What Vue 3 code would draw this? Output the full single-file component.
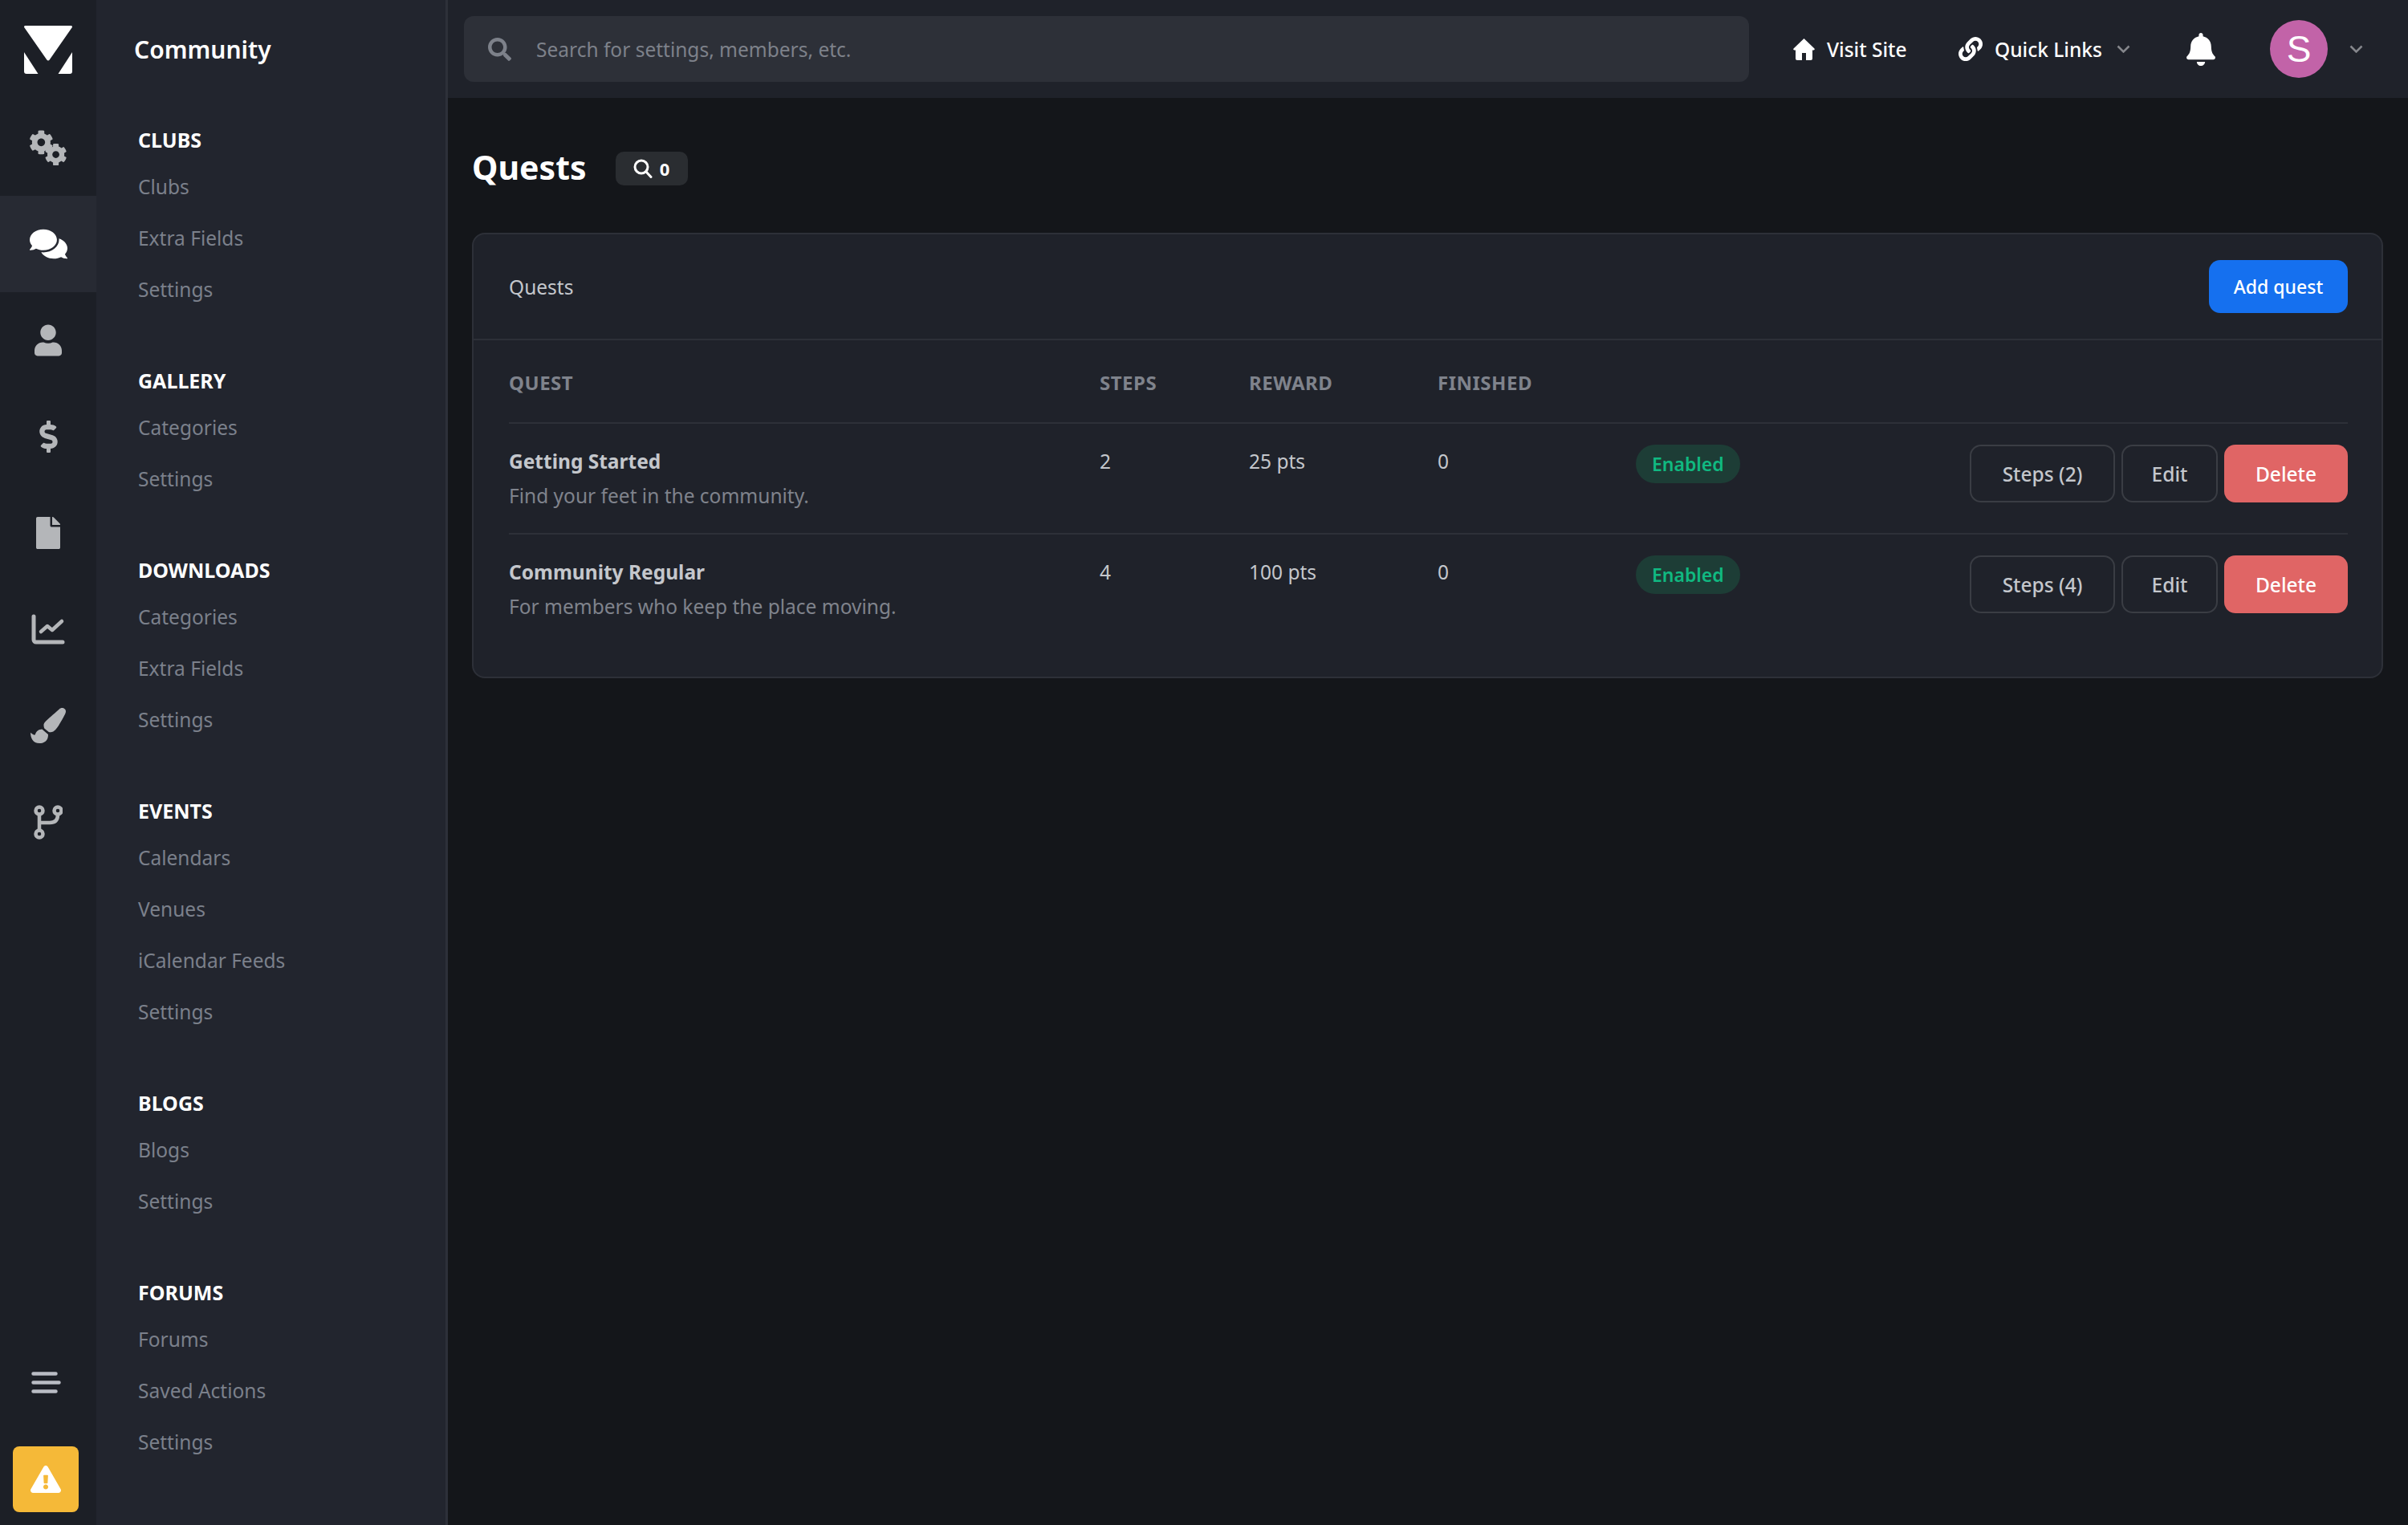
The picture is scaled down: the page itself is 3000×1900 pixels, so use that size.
<script setup>
const cog =
    'M487.4 315.7l-42.6-24.6c4.3-23.2 4.3-47 0-70.2l42.6-24.6c4.9-2.8 7.1-8.6 5.5-14-11.1-35.6-30-67.8-54.7-94.6-3.8-4.1-10-5.1-14.8-2.3L380.8 110c-17.9-15.4-38.5-27.3-60.8-35.1V25.8c0-5.6-3.9-10.5-9.4-11.7-36.7-8.2-74.3-7.8-109.2 0-5.5 1.2-9.4 6.1-9.4 11.7V75c-22.2 7.9-42.8 19.8-60.8 35.1L88.7 85.5c-4.9-2.8-11-1.9-14.8 2.3-24.7 26.7-43.6 58.9-54.7 94.6-1.7 5.4.6 11.2 5.5 14L67.3 221c-4.3 23.2-4.3 47 0 70.2l-42.6 24.6c-4.9 2.8-7.1 8.6-5.5 14 11.1 35.6 30 67.8 54.7 94.6 3.8 4.1 10 5.1 14.8 2.3l42.6-24.6c17.9 15.4 38.5 27.3 60.8 35.1v49.2c0 5.6 3.9 10.5 9.4 11.7 36.7 8.2 74.3 7.8 109.2 0 5.5-1.2 9.4-6.1 9.4-11.7v-49.2c22.2-7.9 42.8-19.8 60.8-35.1l42.6 24.6c4.9 2.8 11 1.9 14.8-2.3 24.7-26.7 43.6-58.9 54.7-94.6 1.5-5.5-.7-11.3-5.6-14.1zM256 336c-44.1 0-80-35.9-80-80s35.9-80 80-80 80 35.9 80 80-35.9 80-80 80z';

const railItems = [
    { id: 'gears', w: 48, h: 44, box: '0 0 48 44', cogs: true },
    {
        id: 'chat',
        w: 47,
        h: 44,
        box: '0 0 576 512',
        d: 'M416 192c0-88.4-93.1-160-208-160S0 103.6 0 192c0 34.3 14.1 65.9 38 92-13.4 30.2-35.5 54.2-35.8 54.5-2.2 2.3-2.8 5.7-1.5 8.7S4.8 352 8 352c36.6 0 66.9-12.3 88.7-25 32.2 15.7 70.3 25 111.3 25 114.9 0 208-71.6 208-160zm122 220c23.9-26 38-57.7 38-92 0-66.9-53.5-124.2-129.3-148.1.9 6.6 1.3 13.3 1.3 20.1 0 105.9-107.7 192-240 192-10.8 0-21.3-.8-31.7-1.9C207.8 439.6 281.8 480 368 480c41 0 79.1-9.2 111.3-25 21.8 12.7 52.1 25 88.7 25 3.2 0 6.1-1.9 7.3-4.8 1.3-2.9.7-6.3-1.5-8.7-.3-.3-22.4-24.2-35.8-54.5z',
        active: true,
    },
    {
        id: 'user',
        w: 34,
        h: 40,
        box: '0 0 448 512',
        d: 'M224 256c70.7 0 128-57.3 128-128S294.7 0 224 0 96 57.3 96 128s57.3 128 128 128zm89.6 32h-16.7c-22.2 10.2-46.9 16-72.9 16s-50.6-5.8-72.9-16h-16.7C60.2 288 0 348.2 0 422.4V464c0 26.5 21.5 48 48 48h352c26.5 0 48-21.5 48-48v-41.6c0-74.2-60.2-134.4-134.4-134.4z',
    },
    {
        id: 'dollar',
        w: 25,
        h: 40,
        box: '0 0 288 512',
        d: 'M209.2 233.4l-108-31.6C88.7 198.2 80 186.5 80 173.5c0-16.3 13.2-29.5 29.5-29.5h66.3c12.2 0 24.2 3.7 34.2 10.5 6.1 4.1 14.3 3.1 19.5-2l34.8-34c7.1-6.9 6.1-18.4-1.8-24.5C238 74.8 207.4 64.1 176 64V16c0-8.8-7.2-16-16-16h-32c-8.8 0-16 7.2-16 16v48h-2.5C45.8 64-5.4 118.7.5 183.6c4.2 46.1 39.4 83.6 83.8 96.6l102.5 30c12.5 3.7 21.2 15.3 21.2 28.3 0 16.3-13.2 29.5-29.5 29.5h-66.3C100 368 88 364.3 78 357.5c-6.1-4.1-14.3-3.1-19.5 2l-34.8 34c-7.1 6.9-6.1 18.4 1.8 24.5 24.5 19.2 55.1 29.9 86.5 30v48c0 8.8 7.2 16 16 16h32c8.8 0 16-7.2 16-16v-48.2c46.6-.9 90.3-28.6 105.7-72.7 21.5-61.6-14.6-124.8-72.5-141.7z',
    },
    {
        id: 'file',
        w: 32,
        h: 40,
        box: '0 0 384 512',
        d: 'M224 136V0H24C10.7 0 0 10.7 0 24v464c0 13.3 10.7 24 24 24h336c13.3 0 24-10.7 24-24V160H248c-13.2 0-24-10.8-24-24zm160-14.1v6.1H256V0h6.1c6.4 0 12.5 2.5 17 7l97.9 98c4.5 4.5 7 10.6 7 16.9z',
    },
    { id: 'chart', w: 42, h: 38, box: '0 0 42 38', chart: true },
    {
        id: 'brush',
        w: 46,
        h: 44,
        box: '0 0 512 512',
        d: 'M167.02 309.34c-40.12 2.58-76.53 17.86-97.19 72.3-2.35 6.21-8 9.98-14.59 9.98-11.11 0-45.46-27.67-55.25-34.35C0 439.62 37.93 512 128 512c75.86 0 128-43.77 128-120.19 0-3.11-.65-6.08-.97-9.13l-88.01-73.34zM457.89 0c-15.16 0-29.37 6.71-40.21 16.45C213.27 199.05 192 203.34 192 257.09c0 13.7 3.25 26.76 8.73 38.7l63.82 53.18c7.21 1.8 14.64 3.03 22.39 3.03 62.11 0 98.11-45.47 211.16-256.46 7.38-14.35 13.9-29.85 13.9-45.99C512 20.64 486 0 457.89 0z',
    },
    { id: 'branch', w: 36, h: 43, box: '0 0 36 43', branch: true },
];

const sections = [
    { title: 'Clubs', items: ['Clubs', 'Extra Fields', 'Settings'] },
    { title: 'Gallery', items: ['Categories', 'Settings'] },
    { title: 'Downloads', items: ['Categories', 'Extra Fields', 'Settings'] },
    { title: 'Events', items: ['Calendars', 'Venues', 'iCalendar Feeds', 'Settings'] },
    { title: 'Blogs', items: ['Blogs', 'Settings'] },
    { title: 'Forums', items: ['Forums', 'Saved Actions', 'Settings'] },
    { title: 'Realtime', items: ['Settings'] },
];

const quests = [
    {
        name: 'Getting Started',
        description: 'Find your feet in the community.',
        steps: 2,
        reward: '25 pts',
        finished: 0,
    },
    {
        name: 'Community Regular',
        description: 'For members who keep the place moving.',
        steps: 4,
        reward: '100 pts',
        finished: 0,
    },
];
</script>

<template>
    <div class="app">
        <nav class="rail">
            <div class="rail-logo">
                <svg width="60" height="60" viewBox="0 0 60 60" fill="#fff">
                    <path d="M1.5 0h57c1.2 0 1.9 1.3 1.2 2.3L31.5 42.800c-.7 1-2.300 1-3 0L.3 2.300C-.4 1.300.3 0 1.500 0z" />
                    <path d="M0 33l17.500 27H3a3 3 0 0 1-3-3z" />
                    <path d="M60 33L42.500 60H57a3 3 0 0 0 3-3z" />
                </svg>
            </div>
            <a v-for="item in railItems" :key="item.id" class="rail-item" :class="{ active: item.active }">
                <svg :width="item.w" :height="item.h" :viewBox="item.box" fill="currentColor">
                    <template v-if="item.cogs">
                        <path :d="cog" transform="translate(0 0) scale(0.06)" />
                        <path :d="cog" transform="translate(19.500 16.500) scale(0.055)" />
                    </template>
                    <g v-else-if="item.chart" fill="none" stroke="currentColor" stroke-width="5" stroke-linecap="round" stroke-linejoin="round">
                        <path d="M3 3v29a3 3 0 0 0 3 3h33" />
                        <path d="M12 22l8-7 6 5 12-11" stroke-width="4.500" />
                    </g>
                    <g v-else-if="item.branch" fill="none" stroke="currentColor" stroke-width="4.500">
                        <circle cx="7" cy="7" r="4.500" />
                        <circle cx="30" cy="7" r="4.500" />
                        <circle cx="7" cy="36" r="4.500" />
                        <path d="M7 12v19M30 12c0 8-5 10-10 10H7" />
                    </g>
                    <path v-else :d="item.d" />
                </svg>
            </a>
            <div class="rail-bottom">
                <button type="button" class="menu-toggle">
                    <svg width="37" height="27" viewBox="0 0 37 27" fill="none" stroke="currentColor" stroke-width="4.500" stroke-linecap="round">
                        <path d="M2.500 2.500h28M2.500 13.500h32M2.500 24.500h28" />
                    </svg>
                </button>
                <button type="button" class="warning-button">
                    <svg width="38" height="34" viewBox="0 0 576 512" fill="#fff">
                        <path d="M569.517 440.013C587.975 472.007 564.806 512 527.94 512H48.054c-36.937 0-59.999-40.055-41.577-71.987L246.423 23.985c18.467-32.009 64.72-31.951 83.154 0l239.94 416.028zM288 354c-25.405 0-46 20.595-46 46s20.595 46 46 46 46-20.595 46-46-20.595-46-46-46zm-43.673-165.346l7.418 136c.347 6.364 5.609 11.346 11.982 11.346h48.546c6.373 0 11.635-4.982 11.982-11.346l7.418-136c.375-6.874-5.098-12.654-11.982-12.654h-63.383c-6.884 0-12.356 5.78-11.981 12.654z" />
                    </svg>
                </button>
            </div>
        </nav>

        <aside class="sidebar">
            <h2 class="sidebar-title">Community</h2>
            <section v-for="section in sections" :key="section.title" class="side-section">
                <h3 class="side-heading">{{ section.title }}</h3>
                <a v-for="item in section.items" :key="item" class="side-link">{{ item }}</a>
            </section>
        </aside>

        <div class="main">
            <header class="topbar">
                <div class="search">
                    <svg class="search-icon" width="29" height="29" viewBox="0 0 512 512" fill="currentColor">
                        <path d="M505 442.7L405.3 343c-4.500-4.500-10.600-7-17-7H372c27.600-35.300 44-79.700 44-128C416 93.100 322.900 0 208 0S0 93.100 0 208s93.100 208 208 208c48.300 0 92.700-16.400 128-44v16.300c0 6.400 2.500 12.500 7 17l99.700 99.700c9.400 9.400 24.600 9.400 33.900 0l28.300-28.300c9.400-9.400 9.400-24.600.1-34zM208 336c-70.700 0-128-57.200-128-128 0-70.700 57.200-128 128-128 70.700 0 128 57.200 128 128 0 70.700-57.200 128-128 128z" />
                    </svg>
                    <span class="search-text">Search for settings, members, etc.</span>
                </div>
                <a class="top-link visit-link">
                    <svg width="27" height="27" viewBox="0 0 27 27" fill="currentColor">
                        <path fill-rule="evenodd" d="M13.500 0l13 12.500c.6.800.2 2-1 2H24v10.500a2 2 0 0 1-2 2H5a2 2 0 0 1-2-2V14.500H1.500c-1.200 0-1.600-1.200-1-2zM11 18v9h5v-9z" />
                    </svg>
                    <span>Visit Site</span>
                </a>
                <a class="top-link quick-link">
                    <svg width="30" height="30" viewBox="0 0 512 512" fill="currentColor">
                        <path d="M326.612 185.391c59.747 59.809 58.927 155.698.36 214.59-.11.12-.24.25-.36.37l-67.2 67.2c-59.27 59.27-155.699 59.262-214.96 0-59.27-59.26-59.27-155.7 0-214.96l37.106-37.106c9.84-9.84 26.786-3.3 27.294 10.606.648 17.722 3.826 35.527 9.69 52.721 1.986 5.822.567 12.262-3.783 16.612l-13.087 13.087c-28.026 28.026-28.905 73.66-1.155 101.96 28.024 28.579 74.086 28.749 102.325.51l67.2-67.19c28.191-28.191 28.073-73.757 0-101.83-3.701-3.694-7.429-6.564-10.341-8.569a16.037 16.037 0 0 1-6.947-12.606c-.396-10.567 3.348-21.456 11.698-29.806l21.054-21.055c5.521-5.521 14.182-6.199 20.584-1.731a152.482 152.482 0 0 1 20.522 17.197zM467.547 44.449c-59.261-59.262-155.69-59.27-214.96 0l-67.2 67.2c-.12.12-.25.25-.36.37-58.566 58.892-59.387 154.781.36 214.59a152.454 152.454 0 0 0 20.521 17.196c6.402 4.468 15.064 3.789 20.584-1.731l21.054-21.055c8.35-8.35 12.094-19.239 11.698-29.806a16.037 16.037 0 0 0-6.947-12.606c-2.912-2.005-6.64-4.875-10.341-8.569-28.073-28.073-28.191-73.639 0-101.83l67.2-67.19c28.239-28.239 74.3-28.069 102.325.51 27.75 28.3 26.872 73.934-1.155 101.96l-13.087 13.087c-4.35 4.35-5.769 10.79-3.783 16.612 5.864 17.194 9.042 34.999 9.69 52.721.509 13.906 17.454 20.446 27.294 10.606l37.106-37.106c59.271-59.259 59.271-155.699.001-214.959z" />
                    </svg>
                    <span>Quick Links</span>
                    <svg class="chevron" width="17" height="10" viewBox="0 0 17 10" fill="none" stroke="currentColor" stroke-width="2.500">
                        <path d="M1.500 1.500l7 7 7-7" />
                    </svg>
                </a>
                <button type="button" class="bell">
                    <svg width="36" height="41" viewBox="0 0 448 512" fill="#fff">
                        <path d="M224 512c35.32 0 63.97-28.65 63.97-64H160.03c0 35.35 28.65 64 63.97 64zm215.39-149.71c-19.32-20.76-55.47-51.99-55.47-154.29 0-77.7-54.48-139.9-127.94-155.16V32c0-17.67-14.32-32-31.98-32s-31.98 14.33-31.98 32v20.84C118.56 68.1 64.08 130.3 64.08 208c0 102.3-36.15 133.53-55.47 154.29-6 6.45-8.66 14.16-8.61 21.71.11 16.4 12.98 32 32.1 32h383.8c19.12 0 32-15.6 32.1-32 .05-7.55-2.61-15.27-8.61-21.71z" />
                    </svg>
                </button>
                <div class="account">
                    <span class="avatar">S</span>
                    <svg class="chevron" width="17" height="10" viewBox="0 0 17 10" fill="none" stroke="currentColor" stroke-width="2.500">
                        <path d="M1.500 1.500l7 7 7-7" />
                    </svg>
                </div>
            </header>

            <main class="content">
                <div class="page-head">
                    <h1 class="page-title">Quests</h1>
                    <span class="count-badge">
                        <svg width="24" height="24" viewBox="0 0 24 24" fill="none" stroke="currentColor" stroke-width="3" stroke-linecap="round">
                            <circle cx="10" cy="10" r="8" />
                            <path d="M16 16l6 6.500" />
                        </svg>
                        0
                    </span>
                </div>

                <section class="card">
                    <div class="card-head">
                        <span class="card-title">Quests</span>
                        <button type="button" class="btn btn-primary">Add quest</button>
                    </div>
                    <div class="card-body">
                        <div class="table-row table-head">
                            <span>Quest</span>
                            <span>Steps</span>
                            <span>Reward</span>
                            <span>Finished</span>
                        </div>
                        <div v-for="quest in quests" :key="quest.name" class="table-row">
                            <div>
                                <div class="quest-name">{{ quest.name }}</div>
                                <div class="quest-desc">{{ quest.description }}</div>
                            </div>
                            <div class="cell">{{ quest.steps }}</div>
                            <div class="cell">{{ quest.reward }}</div>
                            <div class="cell">{{ quest.finished }}</div>
                            <div><span class="status">Enabled</span></div>
                            <div class="actions">
                                <button type="button" class="btn btn-outline steps-btn">Steps ({{ quest.steps }})</button>
                                <button type="button" class="btn btn-outline edit-btn">Edit</button>
                                <button type="button" class="btn btn-danger delete-btn">Delete</button>
                            </div>
                        </div>
                    </div>
                </section>
            </main>
        </div>
    </div>
</template>

<style>
html,
body {
    margin: 0;
    background: #14161a;
}
</style>

<style scoped>
.app {
    display: flex;
    width: 3000px;
    height: 1900px;
    overflow: hidden;
    background: #14161a;
    font-family: 'Noto Sans', 'Open Sans', sans-serif;
    font-size: 24.5px;
    color: #c4c7cc;
}

.rail {
    flex: 0 0 120px;
    display: flex;
    flex-direction: column;
    background: #1c1f26;
}

.rail-logo {
    height: 124px;
    display: flex;
    align-items: center;
    justify-content: center;
}

.rail-item {
    height: 120px;
    display: flex;
    align-items: center;
    justify-content: center;
    color: #b4b6b9;
}

.rail-item.active {
    background: #272a33;
    color: #fff;
}

.rail-bottom {
    margin-top: auto;
    padding: 0 22px 16px 16px;
    display: flex;
    flex-direction: column;
}

.menu-toggle {
    align-self: flex-start;
    margin: 0 0 66px 23px;
    padding: 0;
    border: none;
    background: none;
    color: #b9bcc4;
    line-height: 0;
}

.warning-button {
    width: 82px;
    height: 82px;
    padding: 0;
    border: none;
    border-radius: 8px;
    background: #f5b938;
    display: flex;
    align-items: center;
    justify-content: center;
}

.sidebar {
    flex: 0 0 438px;
    box-sizing: border-box;
    padding: 0 20px 0 52px;
    background: #22252e;
    border-right: 3px solid #2d3039;
    overflow: hidden;
}

.sidebar-title {
    margin: 0 0 23px -5px;
    height: 124px;
    line-height: 124px;
    font-size: 30px;
    font-weight: 600;
    color: #fff;
}

.side-section {
    margin-bottom: 54px;
}

.side-heading {
    margin: 0;
    line-height: 54px;
    font-size: 25px;
    font-weight: 700;
    text-transform: uppercase;
    color: #fff;
}

.side-link {
    display: block;
    line-height: 64px;
    color: #7b808b;
}

.main {
    flex: 1;
    min-width: 0;
    display: flex;
    flex-direction: column;
}

.topbar {
    height: 122px;
    flex: none;
    box-sizing: border-box;
    padding: 0 54px 0 20px;
    display: flex;
    align-items: center;
    background: #1f222a;
}

.search {
    width: 1601px;
    height: 82px;
    box-sizing: border-box;
    padding: 0 30px;
    display: flex;
    align-items: center;
    gap: 31px;
    border-radius: 12px;
    background: #2d3038;
    color: #7d818a;
}

.top-link {
    display: flex;
    align-items: center;
    gap: 15px;
    font-weight: 500;
    color: #fff;
}

.visit-link {
    margin-left: 55px;
    width: 206px;
}

.quick-link {
    width: 284px;
}

.quick-link .chevron {
    margin-left: 3px;
}

.chevron {
    color: #85878c;
}

.bell {
    padding: 0;
    border: none;
    background: none;
    line-height: 0;
    width: 104px;
    text-align: left;
}

.account {
    display: flex;
    align-items: center;
    gap: 27px;
}

.avatar {
    width: 72px;
    height: 72px;
    border-radius: 50%;
    background: #c263a8;
    color: #fff;
    display: flex;
    align-items: center;
    justify-content: center;
    font-family: 'Liberation Sans', sans-serif;
    font-size: 46px;
}

.content {
    padding: 58px 31px 0 30px;
}

.page-head {
    height: 56px;
    margin-bottom: 54px;
    display: flex;
    align-items: center;
    gap: 36px;
}

.page-title {
    margin: 0;
    font-size: 41px;
    font-weight: 700;
    color: #fff;
}

.count-badge {
    width: 90px;
    height: 42px;
    display: flex;
    align-items: center;
    justify-content: center;
    gap: 9px;
    margin-top: 4px;
    border-radius: 10px;
    background: #2a2d31;
    color: #fff;
    font-size: 22px;
    font-weight: 700;
}

.card {
    box-sizing: border-box;
    height: 555px;
    border: 2px solid #2d3038;
    border-radius: 16px;
    background: #1f222a;
}

.card-head {
    height: 130px;
    box-sizing: border-box;
    padding: 0 42px 0 44px;
    display: flex;
    align-items: center;
    justify-content: space-between;
    border-bottom: 2px solid #2d3038;
    height: 132px;
}

.card-title {
    color: #c4c7cc;
}

.card-body {
    padding: 0 42px 0 44px;
}

.table-row {
    display: grid;
    grid-template-columns: 736px 186px 235px 247px 1fr auto;
    box-sizing: border-box;
    min-height: 138px;
    padding-top: 26px;
    border-top: 2px solid #2d3038;
}

.table-head {
    min-height: 102px;
    padding-top: 36px;
    border-top: none;
    font-size: 24px;
    font-weight: 700;
    text-transform: uppercase;
    letter-spacing: 0.5px;
    color: #7f838c;
}

.quest-name {
    line-height: 42px;
    font-weight: 700;
    color: #c4c7cc;
}

.quest-desc {
    line-height: 44px;
    color: #7f838c;
}

.cell {
    line-height: 42px;
}

.status {
    display: inline-flex;
    align-items: center;
    height: 48px;
    padding: 0 20px;
    border-radius: 24px;
    background: #1d3d36;
    color: #10b981;
    font-size: 23px;
    font-weight: 600;
}

.actions {
    display: flex;
    gap: 8px;
}

.btn {
    height: 72px;
    padding: 0;
    border-radius: 14px;
    font: inherit;
    font-weight: 500;
}

.btn-primary {
    width: 173px;
    height: 66px;
    border: none;
    background: #1570ef;
    color: #fff;
    font-size: 23px;
}

.btn-outline {
    border: 2px solid #3a3d44;
    background: transparent;
    color: #c4c7cc;
}

.btn-danger {
    border: none;
    background: #e06565;
    color: #fff;
}

.steps-btn {
    width: 181px;
}

.edit-btn {
    width: 120px;
}

.delete-btn {
    width: 154px;
}
</style>
